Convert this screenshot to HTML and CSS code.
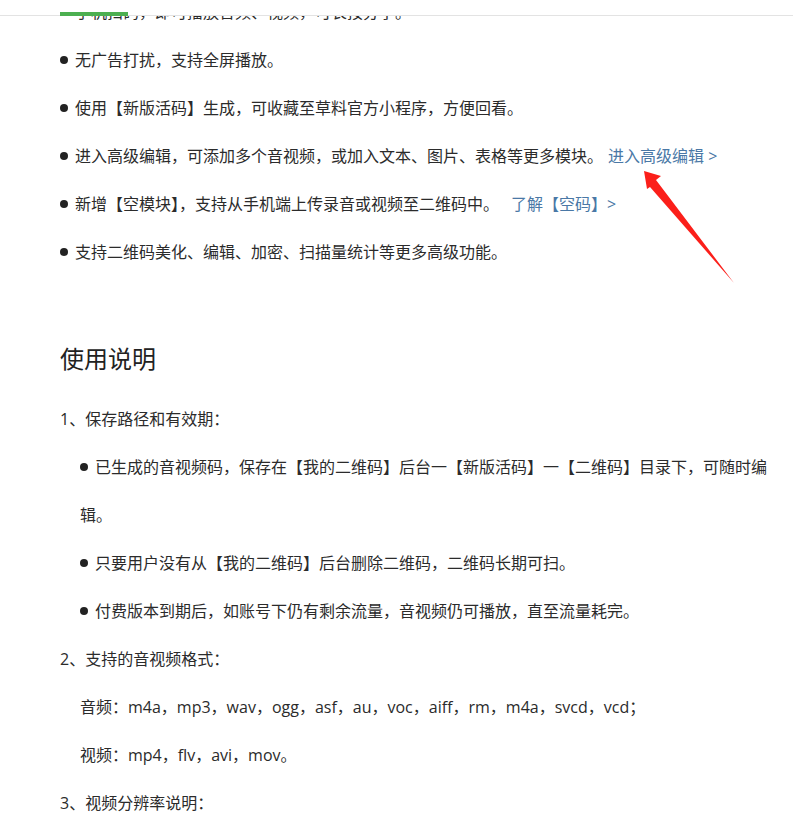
FILE: index.html
```html
<!DOCTYPE html>
<html lang="zh-CN">
<head>
    <meta charset="UTF-8">
    <meta name="viewport" content="width=device-width, initial-scale=1.0">
    <title>音视频码 - 使用说明</title>
    <link rel="stylesheet" href="styles.css">
</head>
<body>
    <div class="tab-bar">
        <span class="tab-active"></span>
    </div>

    <div class="content">
        <p class="item">手机扫码，即可播放音频、视频，可长按分享。</p>
        <p class="item">无广告打扰，支持全屏播放。</p>
        <p class="item">使用【新版活码】生成，可收藏至草料官方小程序，方便回看。</p>
        <p class="item">进入高级编辑，可添加多个音视频，或加入文本、图片、表格等更多模块。<a href="#" class="more near">进入高级编辑 &gt;</a></p>
        <p class="item">新增【空模块】，支持从手机端上传录音或视频至二维码中。<a href="#" class="more">了解【空码】&gt;</a></p>
        <p class="item">支持二维码美化、编辑、加密、扫描量统计等更多高级功能。</p>

        <h2>使用说明</h2>

        <p>1、保存路径和有效期：</p>
        <p class="item sub">已生成的音视频码，保存在【我的二维码】后台一【新版活码】一【二维码】目录下，可随时编辑。</p>
        <p class="item sub">只要用户没有从【我的二维码】后台删除二维码，二维码长期可扫。</p>
        <p class="item sub">付费版本到期后，如账号下仍有剩余流量，音视频仍可播放，直至流量耗完。</p>
        <p>2、支持的音视频格式：</p>
        <p class="sub">音频：m4a，mp3，wav，ogg，asf，au，voc，aiff，rm，m4a，svcd，vcd；</p>
        <p class="sub">视频：mp4，flv，avi，mov。</p>
        <p>3、视频分辨率说明：</p>

        <!-- red annotation arrow pointing at the link -->
        <svg class="arrow" width="100" height="125" viewBox="0 0 100 125">
            <polygon points="4,1 21,6 16,10 94,113 10,17 7,19" fill="#fb1f1a"/>
        </svg>
    </div>
</body>
</html>
```

FILE: styles.css
```css
* {
    margin: 0;
    padding: 0;
    box-sizing: border-box;
}
body {
    background-color: #fff;
    font-family: 'Open Sans', 'Noto Sans CJK SC', sans-serif;
    color: #2b2b2b;
    overflow: hidden;
}
.tab-bar {
    position: fixed;
    top: 0;
    left: 0;
    right: 0;
    height: 16px;
    background-color: #fff;
    border-bottom: 1px solid #e3e3e3;
    z-index: 2;
}
.tab-active {
    position: absolute;
    left: 60px;
    bottom: -1px;
    width: 68px;
    height: 4px;
    background-color: #4caf50;
}
.content {
    position: relative;
    margin-top: -12px;
    padding: 0 20px 0 60px;
}
.content p {
    font-size: 16px;
    line-height: 48px;
}
.item::before {
    content: "";
    display: inline-block;
    width: 8px;
    height: 8px;
    margin: 0 7px 0 0;
    border-radius: 50%;
    background-color: #222;
    vertical-align: 2px;
}
.content .sub {
    padding-left: 20px;
}
.more {
    margin-left: 12px;
    color: #4a78a6;
    text-decoration: none;
}
.more.near {
    margin-left: 5px;
}
h2 {
    font-size: 24px;
    font-weight: normal;
    line-height: 36px;
    color: #222;
    margin: 65px 0 18px;
}
.arrow {
    position: absolute;
    left: 640px;
    top: 182px;
}
```
